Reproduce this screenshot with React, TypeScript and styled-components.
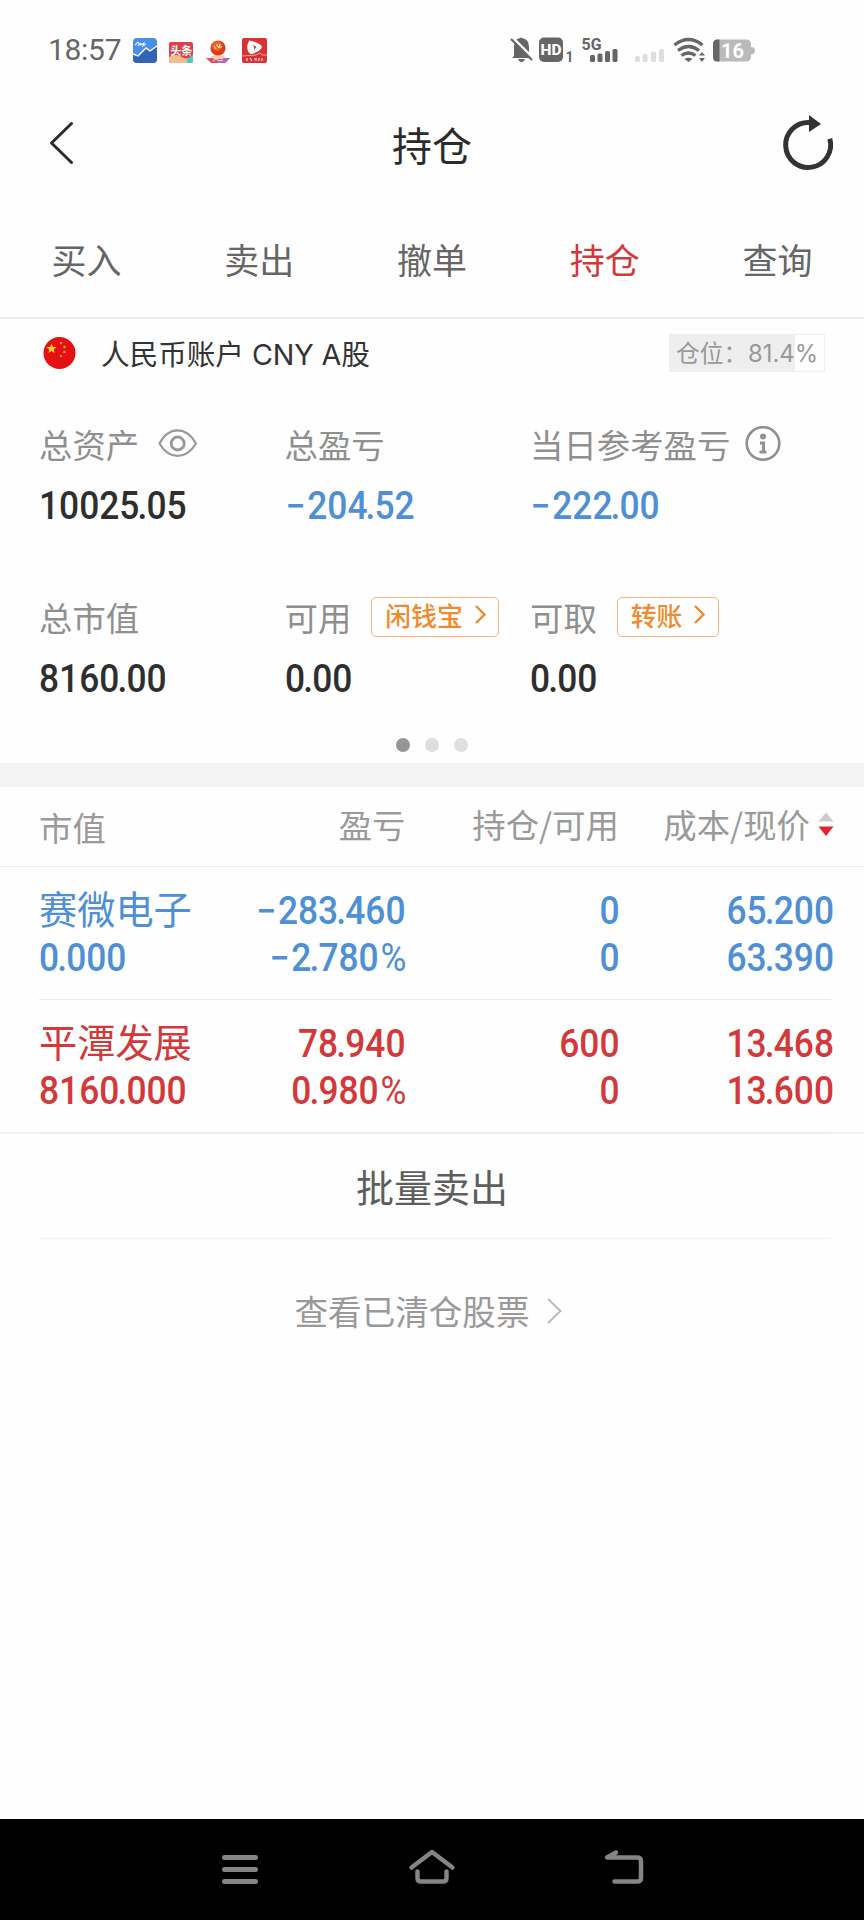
import React from "react";
import styled, { createGlobalStyle } from "styled-components";

const CJK = `"Noto Sans CJK SC", sans-serif`;
const BLUE = "#4e8fd5";
const RED = "#d3383a";

const GlobalStyle = createGlobalStyle`
  * { box-sizing: border-box; }
  body { margin: 0; background: #fefefe; font-family: ${CJK}; }
`;

const Screen = styled.div`
  width: 864px;
  height: 1920px;
  display: flex;
  flex-direction: column;
  background: #fefefe;
  overflow: hidden;
  white-space: nowrap;
`;

const StatusBar = styled.header`
  height: 100px;
  display: flex;
  justify-content: space-between;
  align-items: center;
  padding: 0 108px 0 48px;
`;

const Cluster = styled.div<{ $gap: number }>`
  display: flex;
  align-items: center;
  gap: ${(p) => p.$gap}px;
`;

const Clock = styled.span`
  width: 73px;
  font: 400 30px/40px Roboto, sans-serif;
  letter-spacing: -0.3px;
  color: #666;
`;

const TitleBar = styled.div`
  height: 92px;
  display: grid;
  grid-template-columns: 90px 1fr 90px;
  align-items: center;
`;

const Title = styled.h1`
  margin: -4px 0 0;
  text-align: center;
  font-size: 40px;
  line-height: 60px;
  font-weight: 400;
  color: #2b2b2b;
`;

const BackSlot = styled.div`
  display: flex;
  padding-left: 47px;
  margin-top: -6px;
`;

const RefreshSlot = styled.div`
  display: flex;
  margin-top: -9px;
`;

const Tabs = styled.nav`
  height: 127px;
  padding-top: 9px;
  display: grid;
  grid-template-columns: repeat(5, 1fr);
  border-bottom: 2px solid #ececec;
`;

const Tab = styled.span<{ $active?: boolean }>`
  display: flex;
  align-items: center;
  justify-content: center;
  font-size: 35px;
  line-height: 48px;
  color: ${(p) => (p.$active ? RED : "#666")};
`;

const AccountRow = styled.section`
  height: 68px;
  display: flex;
  align-items: center;
  padding: 0 39px 0 43px;
`;

const AccountName = styled.span`
  flex: 1;
  padding: 3px 0 0 25px;
  font: 400 28.7px/40px Inter, ${CJK};
  letter-spacing: -0.1px;
  color: #333;
`;

const Position = styled.span`
  width: 156px;
  height: 38px;
  padding: 2px 6px 0;
  border: 1px solid #efefef;
  background: linear-gradient(to right, #eeeeee 81.4%, #fefefe 81.4%);
  font: 400 23.8px/34px Inter, ${CJK};
  color: #999;
  display: flex;
  justify-content: space-between;
`;

const Summary = styled.section`
  height: 376px;
  padding: 31.5px 0 0 39px;
`;

const SummaryRow = styled.div<{ $height: number }>`
  height: ${(p) => p.$height}px;
  display: grid;
  grid-template-columns: 245.5px 245.5px 1fr;
`;

const Label = styled.div<{ $gap?: number }>`
  height: 50px;
  display: flex;
  align-items: center;
  gap: ${(p) => p.$gap ?? 0}px;
  font-size: 33.4px;
  line-height: 48px;
  color: #8f8f8f;
`;

const AmountBox = styled.span<{ $color?: string; $right?: boolean }>`
  display: block;
  font: 500 38px/47px Roboto, sans-serif;
  color: ${(p) => p.$color ?? "#2e2e2e"};
  transform: scaleX(0.93);
  transform-origin: ${(p) => (p.$right ? "right" : "left")} center;
  text-align: ${(p) => (p.$right ? "right" : "left")};
`;

const Minus = styled.span`
  margin: 0 2px 0 0.5px;
`;

const Point = styled.span`
  margin: 0 -1px 0 -2px;
`;

const Percent = styled.span`
  margin: 0 -1px 0 2px;
  font-weight: 400;
`;

const SummaryValue = styled.div`
  margin-top: 14px;
`;

const Pill = styled.span`
  height: 40px;
  display: flex;
  align-items: center;
  gap: 12px;
  padding: 0 12.5px 4px 13px;
  border: 1.5px solid #f2b47c;
  border-radius: 5px;
  font-size: 25.8px;
  line-height: 34px;
  font-weight: 500;
  color: #f08a2e;
`;

const Dots = styled.div`
  display: flex;
  justify-content: center;
  gap: 15px;
  margin-left: -39px;
`;

const Dot = styled.i<{ $on?: boolean }>`
  width: 14px;
  height: 14px;
  border-radius: 50%;
  background: ${(p) => (p.$on ? "#969696" : "#dfdfdf")};
`;

const Band = styled.div`
  height: 24px;
  background: #f3f3f3;
`;

const columns = `
  display: grid;
  grid-template-columns: 185px 181.5px 213.5px 215px;
  padding-left: 39px;
`;

const TableHead = styled.div`
  ${columns}
  height: 80px;
  padding-top: 13px;
  border-bottom: 1px solid #ebebeb;
  font-size: 33.4px;
  line-height: 48px;
  color: #9a9a9a;
`;

const HeadCell = styled.span<{ $right?: boolean }>`
  display: flex;
  justify-content: ${(p) => (p.$right ? "flex-end" : "flex-start")};
  gap: 8px;
  padding-top: ${(p) => (p.$right ? 0 : 3)}px;
`;

const SortMark = styled.svg`
  margin-top: 12px;
`;

const Holding = styled.div<{ $color: string }>`
  ${columns}
  height: 132px;
  padding-top: 20px;
  color: ${(p) => p.$color};
`;

const StockName = styled.div`
  height: 48px;
  font-size: 38.2px;
  line-height: 42px;
`;

const Figures = styled.div`
  padding-top: 1px;
`;

const Rule = styled.hr<{ $color: string; $size?: number }>`
  width: 792px;
  height: ${(p) => p.$size ?? 1}px;
  margin: 0 0 0 39px;
  border: 0;
  background: ${(p) => p.$color};
`;

const EdgeRule = styled.div`
  background: #f3f3f3;
`;

const SellAll = styled.div`
  height: 104px;
  padding-top: 24px;
  text-align: center;
  font-size: 38px;
  line-height: 56px;
  color: #5e5e5e;
`;

const ClearedLink = styled.div`
  height: 143px;
  display: flex;
  justify-content: center;
  align-items: center;
  gap: 17px;
  padding-right: 8px;
  font-size: 33.6px;
  line-height: 48px;
  color: #999;
`;

const NavBar = styled.footer`
  margin-top: auto;
  height: 101px;
  display: flex;
  justify-content: center;
  gap: 144px;
  padding-top: 28px;
  background: #000;
`;

const BlueChart = () => (
  <svg width="24" height="25" viewBox="0 0 24 25">
    <rect width="24" height="25" rx="4" fill="#4a8fe6" />
    <path d="M0 16L5 18L13 10L17 13L24 8V21Q24 25 20 25H4Q0 25 0 21Z" fill="#3563b4" />
    <path d="M0 16L5 18L13 10L17 13L24 8" fill="none" stroke="#fff" strokeWidth="1.4" />
    <path d="M2 7L5 4L7 7M5 8Q8 3 8 7L11 5L10 8L13 6" fill="none" stroke="#e5f2ff" strokeWidth="1.1" />
  </svg>
);

const NewsIcon = () => (
  <svg width="25" height="25" viewBox="0 0 25 25">
    <rect y="4" width="24" height="21" rx="2" fill="#df3f48" />
    <path d="M0 19Q7 15 13 19T24 17V23Q24 25 22 25H2Q0 25 0 23Z" fill="#f3bd8b" />
    <path d="M18 21L24 17V23Q24 25 22 25H18Z" fill="#55c6c7" />
    <text x="12.2" y="16.5" textAnchor="middle" fontFamily={CJK} fontWeight="700" fontSize="11" fill="#fff">头条</text>
  </svg>
);

const OrbIcon = () => (
  <svg width="24" height="25" viewBox="0 0 24 25">
    <path d="M0 20H24L19 25H5Z" fill="#d7535d" />
    <path d="M13 20H24L19 25H12Z" fill="#a86bc5" />
    <path d="M7 23L10 21L13 23L17 22" stroke="#f7d9e5" fill="none" />
    <ellipse cx="12" cy="19" rx="7" ry="2" fill="#f6cdb0" />
    <circle cx="12" cy="10" r="7.6" fill="#dd3d18" />
    <circle cx="11" cy="8" r="5" fill="#ee6522" />
    <path d="M8 8L10 11M10.500 6.500L13 10M14 6L13.500 9L16 8.500" stroke="#ffe1bd" strokeWidth="1.2" fill="none" />
  </svg>
);

const VideoIcon = () => (
  <svg width="25" height="25" viewBox="0 0 25 25">
    <rect width="25" height="25" rx="2" fill="#dc3035" />
    <path d="M7 3Q6 2 10 3Q20 6 20 9Q19 13 10 16Q7 16 6 13Q4 8 7 3Z" fill="#fff" />
    <path d="M10.500 6.500L14.500 9L12 12V9Z" fill="#dc3035" />
    <path d="M0 18L14 17L18 15L20 17H25" stroke="#f5a6a2" fill="none" />
    <path d="M5 20V23M8 20L10 23M12 21H15M14 20V23M17 20V23M20 20V23" stroke="#ffd6d2" strokeWidth="1.2" />
  </svg>
);

const SystemIcons = () => (
  <svg width="246" height="42" viewBox="0 -8 246 42">
    <g fill="#666">
      <path d="M4 19V10Q4 2 10 1Q11 0 12 1Q19 2 19 10V18L21 21H2Z" />
      <path d="M8 22H15Q14 25 11.500 25Q9 25 8 22Z" />
      <rect x="29" y="0.500" width="24" height="24.500" rx="5" />
      <rect x="80" y="18" width="5" height="7" rx="1.500" />
      <rect x="87.500" y="16.500" width="5" height="8.500" rx="1.500" />
      <rect x="95" y="14" width="5" height="11" rx="1.500" />
      <rect x="102.500" y="12" width="5" height="13" rx="1.500" />
      <path d="M192 15L195 18.500H189ZM192 25L189 21H195Z" />
      <path d="M174.500 22L178.500 25L182.500 22Q178.500 19.500 174.500 22Z" />
    </g>
    <path d="M2 0L24 22" stroke="#fefefe" strokeWidth="2.500" />
    <path d="M1 2L22 23" stroke="#666" strokeWidth="2.200" />
    <text x="41" y="18.300" textAnchor="middle" fontFamily="Roboto, sans-serif" fontSize="15.500" fontWeight="800" fill="#fff">HD</text>
    <text x="55.500" y="25" fontFamily="Roboto, sans-serif" fontSize="14" fontWeight="700" fill="#666">1</text>
    <text x="71.500" y="12.500" fontFamily="Roboto, sans-serif" fontSize="17" fontWeight="700" fill="#666" textLength="20" lengthAdjust="spacingAndGlyphs">5G</text>
    <g fill="#dedede">
      <rect x="125" y="19" width="5" height="6" rx="1.500" />
      <rect x="132.500" y="17" width="5" height="8" rx="1.500" />
      <rect x="141" y="14.500" width="5" height="10.500" rx="1.500" />
      <rect x="149" y="12" width="5" height="13" rx="1.500" />
    </g>
    <g fill="none" stroke="#666" strokeWidth="3.300">
      <path d="M164.500 8Q178.500 -3 192.500 8" />
      <path d="M168 13.500Q178.500 5.500 189 13.500" />
      <path d="M171.500 18.500Q178.500 13.500 185.500 18.500" />
    </g>
    <path d="M207 2.500H236Q241 2.500 241 7.500V10Q245 10 245 13.500T241 17.500V19.500Q241 24.500 236 24.500H207Z" fill="#bababa" />
    <path d="M209.500 2.500V24.500H207Q203 24.500 203 20V7Q203 2.500 207 2.500Z" fill="#666" />
    <text x="222.500" y="20.500" textAnchor="middle" fontFamily="Roboto, sans-serif" fontSize="20" fontWeight="700" fill="#fff">16</text>
  </svg>
);

const FlagIcon = () => (
  <svg width="33" height="33" viewBox="0 0 33 33">
    <circle cx="16.5" cy="16" r="16" fill="#e60f13" />
    <path d="M8.500 6.500L9.900 9.900L13.500 10.100L10.700 12.400L11.700 15.900L8.500 14L5.400 15.900L6.300 12.400L3.500 10.100L7.100 9.900Z" fill="#ffd21f" />
    <g fill="#f6922a">
      <circle cx="18" cy="6" r="1.300" />
      <circle cx="21.500" cy="10" r="1.300" />
      <circle cx="21.500" cy="15" r="1.300" />
      <circle cx="18" cy="19" r="1.300" />
    </g>
  </svg>
);

const Chevron = ({ w, h, color, stroke }: { w: number; h: number; color: string; stroke: number }) => (
  <svg width={w} height={h} viewBox={`0 0 ${w} ${h}`} fill="none" stroke={color} strokeWidth={stroke}>
    <path d={`M1 1L${w - 1.5} ${h / 2}L1 ${h - 1}`} />
  </svg>
);

const Amount = ({ value, color, right }: { value: string; color?: string; right?: boolean }) => (
  <AmountBox $color={color} $right={right}>
    {value.split(/([−.%])/).map((part, i) => {
      if (part === "−") return <Minus key={i}>{part}</Minus>;
      if (part === ".") return <Point key={i}>{part}</Point>;
      if (part === "%") return <Percent key={i}>{part}</Percent>;
      return part;
    })}
  </AmountBox>
);

type Stock = { name: string; color: string; value: string; profit: [string, string]; held: [string, string]; price: [string, string] };

const stocks: Stock[] = [
  { name: "赛微电子", color: BLUE, value: "0.000", profit: ["−283.460", "−2.780%"], held: ["0", "0"], price: ["65.200", "63.390"] },
  { name: "平潭发展", color: RED, value: "8160.000", profit: ["78.940", "0.980%"], held: ["600", "0"], price: ["13.468", "13.600"] },
];

const StockRow = ({ s }: { s: Stock }) => (
  <Holding $color={s.color}>
    <div>
      <StockName>{s.name}</StockName>
      <Amount color={s.color} value={s.value} />
    </div>
    {[s.profit, s.held, s.price].map((pair, i) => (
      <Figures key={i}>
        {pair.map((v, j) => (
          <Amount key={j} right color={s.color} value={v} />
        ))}
      </Figures>
    ))}
  </Holding>
);

export default function App() {
  return (
    <Screen>
      <GlobalStyle />
      <StatusBar>
        <Cluster $gap={12}>
          <Clock>18:57</Clock>
          <BlueChart />
          <NewsIcon />
          <OrbIcon />
          <VideoIcon />
        </Cluster>
        <SystemIcons />
      </StatusBar>

      <TitleBar>
        <BackSlot>
          <svg width="28" height="44" viewBox="0 0 28 44" fill="none" stroke="#2b2b2b" strokeWidth="3">
            <path d="M24.500 2.500L4.500 22L24.500 41.500" strokeLinecap="round" strokeLinejoin="round" />
          </svg>
        </BackSlot>
        <Title>持仓</Title>
        <RefreshSlot>
          <svg width="64" height="64" viewBox="0 0 64 64">
            <path d="M35.500 12.500A22.500 22.500 0 1 0 55.800 28.800" fill="none" stroke="#333" strokeWidth="5" />
            <path d="M35 5L47 14L35 22Z" fill="#333" />
          </svg>
        </RefreshSlot>
      </TitleBar>

      <Tabs>
        <Tab>买入</Tab>
        <Tab>卖出</Tab>
        <Tab>撤单</Tab>
        <Tab $active>持仓</Tab>
        <Tab>查询</Tab>
      </Tabs>

      <AccountRow>
        <FlagIcon />
        <AccountName>人民币账户 CNY A股</AccountName>
        <Position>
          <span>仓位：</span>
          <span>81.4%</span>
        </Position>
      </AccountRow>

      <Summary>
        <SummaryRow $height={173}>
          <div>
            <Label $gap={19}>
              总资产
              <svg width="40" height="30" viewBox="0 0 40 30" fill="none" stroke="#999" strokeWidth="2.200">
                <path d="M1.500 14.500C11 -3 28 -3 38 14.500C28 31 11 31 1.500 14.500Z" strokeLinejoin="round" />
                <circle cx="19.700" cy="14.500" r="6.500" strokeWidth="2.800" />
              </svg>
            </Label>
            <SummaryValue><Amount value="10025.05" /></SummaryValue>
          </div>
          <div>
            <Label>总盈亏</Label>
            <SummaryValue><Amount color={BLUE} value="−204.52" /></SummaryValue>
          </div>
          <div>
            <Label $gap={15}>
              当日参考盈亏
              <svg width="36" height="36" viewBox="0 0 36 36" fill="none" stroke="#919191">
                <circle cx="18" cy="17.500" r="16.300" strokeWidth="2.600" />
                <circle cx="18" cy="10.500" r="3" fill="#919191" stroke="none" />
                <path d="M15 17H18.500V25.500M14.500 26H21.500" strokeWidth="3" />
              </svg>
            </Label>
            <SummaryValue><Amount color={BLUE} value="−222.00" /></SummaryValue>
          </div>
        </SummaryRow>
        <SummaryRow $height={146.5}>
          <div>
            <Label>总市值</Label>
            <SummaryValue><Amount value="8160.00" /></SummaryValue>
          </div>
          <div>
            <Label $gap={20}>
              可用
              <Pill>
                闲钱宝
                <Chevron w={11} h={19} color="#f08a2e" stroke={2.4} />
              </Pill>
            </Label>
            <SummaryValue><Amount value="0.00" /></SummaryValue>
          </div>
          <div>
            <Label $gap={20}>
              可取
              <Pill>
                转账
                <Chevron w={11} h={19} color="#f08a2e" stroke={2.4} />
              </Pill>
            </Label>
            <SummaryValue><Amount value="0.00" /></SummaryValue>
          </div>
        </SummaryRow>
        <Dots>
          <Dot $on />
          <Dot />
          <Dot />
        </Dots>
      </Summary>

      <Band />

      <TableHead>
        <HeadCell>市值</HeadCell>
        <HeadCell $right>盈亏</HeadCell>
        <HeadCell $right>持仓/可用</HeadCell>
        <HeadCell $right>
          成本/现价
          <SortMark width="16" height="25" viewBox="0 0 16 25">
            <path d="M8 0.500L15.500 9.500H0.500Z" fill="#ccc" />
            <path d="M8 24L0.500 14.500H15.500Z" fill="#e0262c" />
          </SortMark>
        </HeadCell>
      </TableHead>

      <StockRow s={stocks[0]} />
      <Rule $color="#ebebeb" />
      <StockRow s={stocks[1]} />
      <EdgeRule>
        <Rule $color="#ececec" $size={2} />
      </EdgeRule>

      <SellAll>批量卖出</SellAll>
      <Rule $color="#f2f2f2" />
      <ClearedLink>
        查看已清仓股票
        <Chevron w={15} h={26} color="#bbb" stroke={2} />
      </ClearedLink>

      <NavBar>
        <svg width="48" height="40" viewBox="0 0 48 40" stroke="#858585" strokeWidth="5" strokeLinecap="round">
          <path d="M8.500 10.500H39.500M8.500 22.500H39.500M8.500 34.500H39.500" />
        </svg>
        <svg width="48" height="40" viewBox="0 0 48 40" fill="none" stroke="#858585" strokeWidth="4.500" strokeLinecap="round" strokeLinejoin="round">
          <path d="M3.500 20.500L24 5L44.500 20.500M9.500 24.500V31Q9.500 34.500 13 34.500H35Q38.500 34.500 38.500 31V24.500" />
        </svg>
        <svg width="48" height="40" viewBox="0 0 48 40" fill="none" stroke="#858585" strokeWidth="4.500" strokeLinecap="round" strokeLinejoin="round">
          <path d="M16 5.500L7 10.500H37Q41 10.500 41 14V31Q41 34.500 37 34.500H14.500" />
        </svg>
      </NavBar>
    </Screen>
  );
}
